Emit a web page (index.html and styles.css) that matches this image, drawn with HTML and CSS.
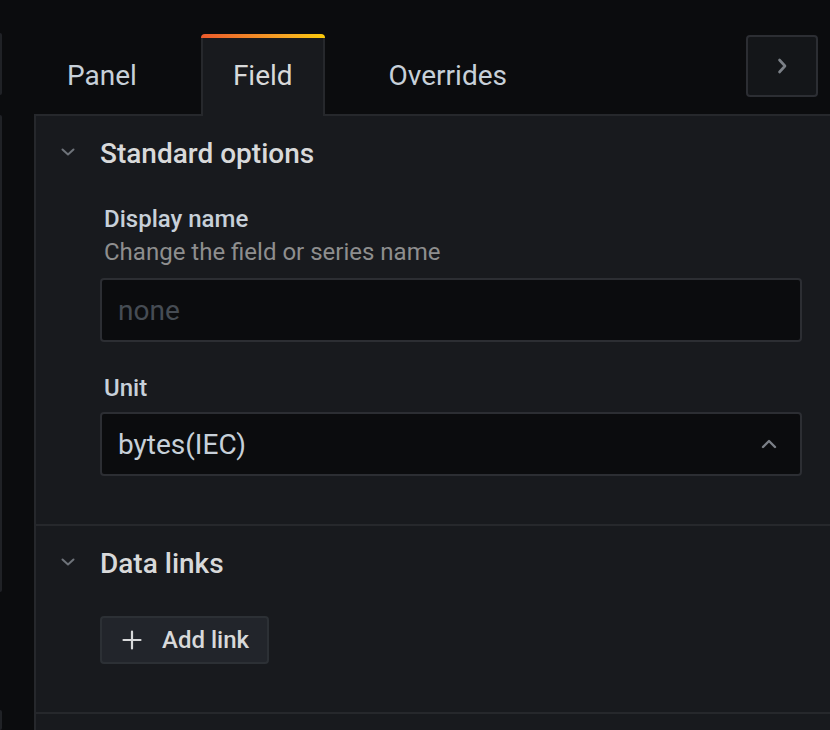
FILE: index.html
```html
<!DOCTYPE html>
<html>
<head>
<meta charset="utf-8">
<link rel="stylesheet" href="styles.css">
</head>
<body>
<div class="app">
  <div class="rail">
    <div class="rail-piece rail-a"></div>
    <div class="rail-piece rail-b"></div>
    <div class="rail-piece rail-c"></div>
  </div>
  <div class="editor">
    <div class="tabbar">
      <div class="tab">Panel</div>
      <div class="tab active">Field</div>
      <div class="tab">Overrides</div>
      <div class="spacer"></div>
      <button class="collapse-btn">
        <svg width="20" height="20" viewBox="0 0 20 20"><path d="M7.5 4 L13 10 L7.5 16" fill="none" stroke="#7b8087" stroke-width="2.6" stroke-linecap="round" stroke-linejoin="round"/></svg>
      </button>
    </div>
    <div class="pane">
      <div class="section">
        <div class="section-header">
          <svg class="caret" width="16" height="16" viewBox="0 0 16 16"><path d="M2.5 5.5 L8 10.5 L13.5 5.5" fill="none" stroke="#6e737a" stroke-width="2" stroke-linecap="round" stroke-linejoin="round"/></svg>
          <span class="section-title">Standard options</span>
        </div>
        <div class="section-body">
          <div class="field">
            <div class="label">Display name</div>
            <div class="desc">Change the field or series name</div>
            <div class="input"><span class="placeholder">none</span></div>
          </div>
          <div class="field unit">
            <div class="label">Unit</div>
            <div class="input select">
              <span class="value">bytes(IEC)</span>
              <svg width="18" height="18" viewBox="0 0 18 18"><path d="M3 12 L9 6 L15 12" fill="none" stroke="#7b8087" stroke-width="2.4" stroke-linecap="round" stroke-linejoin="round"/></svg>
            </div>
          </div>
        </div>
      </div>
      <div class="section">
        <div class="section-header">
          <svg class="caret" width="16" height="16" viewBox="0 0 16 16"><path d="M2.5 5.5 L8 10.5 L13.5 5.5" fill="none" stroke="#6e737a" stroke-width="2" stroke-linecap="round" stroke-linejoin="round"/></svg>
          <span class="section-title">Data links</span>
        </div>
        <div class="section-body links">
          <button class="add-btn">
            <svg width="20" height="20" viewBox="0 0 20 20"><path d="M10 1.5 V18.5 M1.5 10 H18.5" fill="none" stroke="#d8d9da" stroke-width="2.2" stroke-linecap="round"/></svg>
            <span>Add link</span>
          </button>
        </div>
      </div>
      <div class="section rest"></div>
    </div>
  </div>
</div>
</body>
</html>
```
FILE: styles.css
```css
html, body {
  margin: 0;
  padding: 0;
  background: #0b0c0e;
  height: 730px;
  overflow: hidden;
}
body {
  font-family: Roboto, "Liberation Sans", sans-serif;
  color: #c7d0d9;
}
.app {
  display: flex;
  height: 730px;
}
.rail {
  width: 34px;
  flex: none;
  display: flex;
  flex-direction: column;
}
.rail-piece {
  width: 2px;
  background: #202226;
  border-radius: 0 2px 2px 0;
}
.rail-a { margin-top: 33px; height: 62px; }
.rail-b { margin-top: 20px; height: 477px; }
.rail-c { margin-top: 118px; flex: 1; }
.editor {
  flex: 1;
  display: flex;
  flex-direction: column;
  min-width: 0;
}
.tabbar {
  height: 114px;
  display: flex;
  align-items: flex-end;
  gap: 32px;
  padding-left: 1px;
  padding-right: 12px;
  box-sizing: border-box;
  position: relative;
  z-index: 1;
}
.tab {
  height: 80px;
  padding: 3px 32px 0;
  display: flex;
  align-items: center;
  font-size: 28px;
  color: #c7d0d9;
  box-sizing: border-box;
}
.tab.active {
  background: #181a1e;
  border-left: 2px solid #26282c;
  border-right: 2px solid #26282c;
  border-radius: 5px 5px 0 0;
  height: 82px;
  margin-bottom: -2px;
  padding: 1px 30px 0;
  color: #d8d9da;
  position: relative;
}
.tab.active::before {
  content: "";
  position: absolute;
  left: -2px;
  right: -2px;
  top: 0;
  height: 4px;
  border-radius: 4px 4px 0 0;
  background: linear-gradient(90deg, #eb5a2c, #f7a823 70%, #fbca0a);
}
.spacer { flex: 1; }
.collapse-btn {
  align-self: flex-start;
  margin-top: 35px;
  width: 72px;
  height: 62px;
  background: #141619;
  border: 2px solid #2c2e33;
  border-radius: 4px;
  display: flex;
  align-items: center;
  justify-content: center;
  padding: 0;
}
.pane {
  flex: 1;
  background: #181a1e;
  border-top: 2px solid #26282c;
  border-left: 2px solid #26282c;
}
.section {
  border-bottom: 2px solid #26282c;
}
.section.rest { border-bottom: none; }
.section-header {
  height: 72px;
  display: flex;
  align-items: center;
  padding-left: 24px;
}
.caret { flex: none; }
.section-title {
  margin-left: 24px;
  font-size: 28px;
  font-weight: 500;
  color: #d8d9da;
  padding-top: 2px;
}
.section-body {
  margin: 0 28px 0 64px;
  padding: 15px 0 48px;
}
.section-body.links {
  padding-top: 18px;
}
.label {
  font-size: 24px;
  font-weight: 500;
  line-height: 32px;
  padding-left: 4px;
  color: #c7d0d9;
}
.desc {
  font-size: 24px;
  line-height: 32px;
  padding-left: 4px;
  margin-top: 1px;
  color: #8e8e8e;
}
.input {
  margin-top: 10px;
  height: 64px;
  box-sizing: border-box;
  background: #0b0c0e;
  border: 2px solid #2c2e33;
  border-radius: 4px;
  display: flex;
  align-items: center;
  padding: 0 22px 0 16px;
  font-size: 28px;
}
.placeholder { color: #464c54; }
.field.unit { margin-top: 30px; }
.field.unit .input { margin-top: 8px; }
.select { justify-content: space-between; }
.value { color: #c7d0d9; }
.add-btn {
  height: 48px;
  display: flex;
  align-items: center;
  gap: 20px;
  padding: 0 18px 0 20px;
  background: #22252b;
  border: 2px solid #2c3035;
  border-radius: 4px;
  font-family: Roboto, "Liberation Sans", sans-serif;
  font-size: 24px;
  font-weight: 500;
  color: #d8d9da;
}
```
